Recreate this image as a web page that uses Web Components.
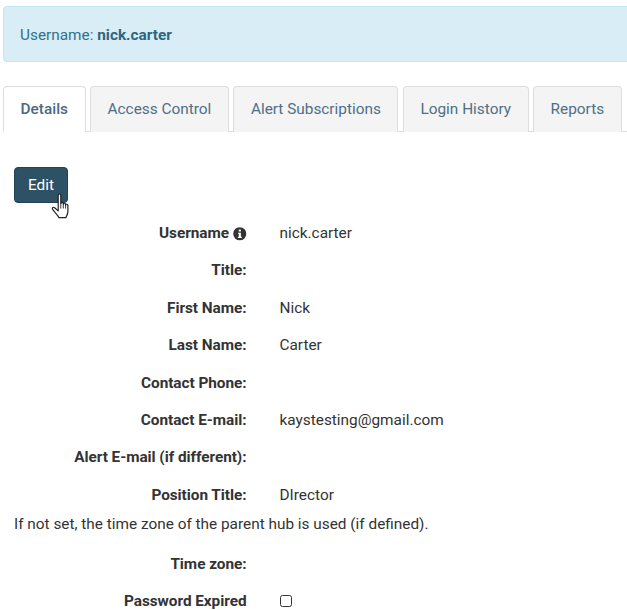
<!DOCTYPE html>
<html lang="en"><head><meta charset="utf-8"><title>User</title>
<style>
html,body{margin:0;padding:0;background:#fff;overflow:hidden;height:610px}
body{font:15.36px/21.6px Roboto,"Liberation Sans",sans-serif;color:#333}
</style></head><body>
<template id="t-page"><style>
:host{display:block;width:640px;box-sizing:border-box;padding:6px 0 0 3px}
.body{padding:35px 0 0 11px;display:flex;flex-direction:column;align-items:flex-start}
.form{display:flex;flex-direction:column;align-self:stretch;margin-left:-11px;margin-top:20px}
</style><slot name="alert"></slot><slot name="tabs"></slot><div class="body"><slot name="action"></slot><div class="form"><slot></slot></div></div></template>

<template id="t-alert"><style>
:host{display:flex;box-sizing:border-box;height:56px;padding:3px 16px 0;align-items:center;background:#d9edf7;border:1px solid #bce8f1;border-radius:4px;color:#31708f;font-size:15.36px;margin-bottom:24px;white-space:pre}
::slotted(b){font-weight:700;color:#2f6580}
</style><slot></slot></template>

<template id="t-tabs"><style>
:host{display:flex;gap:4.4px;height:46px;box-sizing:border-box;border-bottom:1px solid #ddd;align-items:flex-start}
</style><slot></slot></template>

<template id="t-tab"><style>
:host{display:flex;align-items:center;justify-content:center;box-sizing:border-box;height:46px;padding:0 16.6px;background:#f4f4f4;border:1px solid #ddd;border-bottom:0;border-radius:4px 4px 0 0;color:#4d6f87;font-size:15.36px;flex:none}
:host([active]){background:#fff;font-weight:500;color:#4a6a80}
</style><slot></slot></template>

<template id="t-btn"><style>
:host{display:inline-flex;position:relative;align-items:center;justify-content:center;box-sizing:border-box;width:54px;height:36px;padding-top:1px;background:#2d5165;border:1px solid #234152;border-radius:4px;color:#fff;font-size:15.36px}
svg{position:absolute;left:36px;top:25px;width:20px;height:26px}
</style><slot></slot><svg viewBox="0 0 20 26"><path d="M7.2 2.2c0-1.6 2.6-1.6 2.6 0v8.3l.2-.1c0-1.3 2.3-1.3 2.3 0v.7c.2-1.2 2.3-1.1 2.3.1v.8c.3-1 2.2-1 2.3.2v6c0 2.9-1.3 4.5-2 6.5H8c-.6-1.8-2.3-3.3-3.8-5l-2.6-3.4c-.9-1.4.8-2.7 2-1.6l3.6 3.2z" fill="#fff" stroke="#222" stroke-width="1.2" stroke-linejoin="round"/><path d="M9.8 10.6v5M12.3 11v4.5M14.6 11.8v3.8" stroke="#222" stroke-width=".9" fill="none"/></svg></template>

<template id="t-row"><style>
:host{display:grid;grid-template-columns:243.5px 1fr;column-gap:33px;height:37.4px;box-sizing:border-box;align-items:start;line-height:21.6px}
.l{text-align:right;font-weight:700;letter-spacing:-.05px;color:#333;display:flex;justify-content:flex-end;align-items:center;gap:4px;white-space:nowrap}
.v{color:#333;display:flex;align-items:center;min-height:21.6px}
</style><div class="l"><slot name="label"></slot></div><div class="v"><slot></slot></div></template>

<template id="t-info"><style>
:host{display:inline-flex;width:13.5px;height:13.5px;margin-left:0}
svg{width:13.5px;height:13.5px;display:block}
</style><svg viewBox="0 0 13 13"><circle cx="6.5" cy="6.5" r="6.3" fill="#333"/><rect x="5.5" y="2.4" width="2.1" height="2" rx=".5" fill="#fff"/><path d="M4.8 5.5h2.8v3.9h.9v1.1H4.7V9.4h.9V6.6h-.8z" fill="#fff"/></svg></template>

<template id="t-check"><style>
:host{display:inline-block;box-sizing:border-box;width:12px;height:12px;border:1.2px solid #333;border-radius:2.5px;background:#fff;margin-top:-1px}
</style></template>

<template id="t-note"><style>
:host{display:block;margin-left:11px;height:29px;line-height:21.6px;white-space:nowrap}
</style><slot></slot></template>

<user-page>
 <info-alert slot="alert">Username: <b>nick.carter</b></info-alert>
 <tab-bar slot="tabs">
  <tab-item active>Details</tab-item><tab-item>Access Control</tab-item><tab-item>Alert Subscriptions</tab-item><tab-item>Login History</tab-item><tab-item>Reports</tab-item>
 </tab-bar>
 <edit-button slot="action">Edit</edit-button>
 <form-row><span slot="label">Username</span><info-icon slot="label"></info-icon>nick.carter</form-row>
 <form-row><span slot="label">Title:</span></form-row>
 <form-row><span slot="label">First Name:</span>Nick</form-row>
 <form-row><span slot="label">Last Name:</span>Carter</form-row>
 <form-row><span slot="label">Contact Phone:</span></form-row>
 <form-row><span slot="label">Contact E-mail:</span>kaystesting@gmail.com</form-row>
 <form-row><span slot="label">Alert E-mail (if different):</span></form-row>
 <form-row style="height:29px"><span slot="label">Position Title:</span>DIrector</form-row>
 <form-note>If not set, the time zone of the parent hub is used (if defined).</form-note>
 <form-row style="margin-top:11px"><span slot="label">Time zone:</span></form-row>
 <form-row><span slot="label">Password Expired</span><check-box></check-box></form-row>
</user-page>
<script>
function reg(name,tpl){customElements.define(name,class extends HTMLElement{constructor(){super();this.attachShadow({mode:'open'}).appendChild(document.getElementById(tpl).content.cloneNode(true));}});}
reg('user-page','t-page');reg('info-alert','t-alert');reg('tab-bar','t-tabs');reg('tab-item','t-tab');reg('edit-button','t-btn');reg('form-row','t-row');reg('info-icon','t-info');reg('check-box','t-check');reg('form-note','t-note');
</script>
</body></html>
